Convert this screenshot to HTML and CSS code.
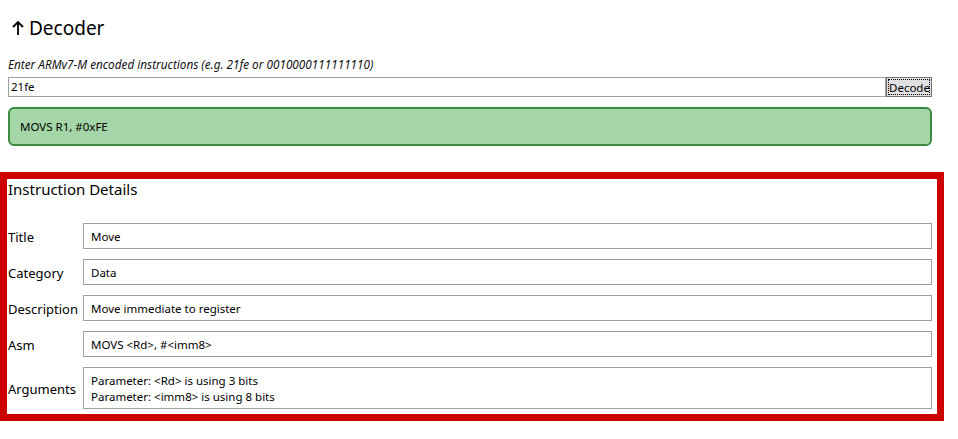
FILE: index.html
```html
<!DOCTYPE html>
<html>
<head>
<meta charset="utf-8">
<link rel="stylesheet" href="styles.css">
</head>
<body>
<div class="page">
  <h1 class="title">
    <svg class="arrow" width="12" height="16" viewBox="0 0 12 16"><path d="M6 15V2M1 7l5-5 5 5" fill="none" stroke="#000" stroke-width="1.8"/></svg>
    <span>Decoder</span>
  </h1>
  <div class="hint">Enter ARMv7-M encoded instructions (e.g. 21fe or 0010000111111110)</div>
  <div class="input-row">
    <div class="input">21fe</div>
    <div class="btn"><span class="btn-focus">Decode</span></div>
  </div>
  <div class="result">MOVS R1, #0xFE</div>
  <div class="details">
    <div class="details-title">Instruction Details</div>
    <div class="grid">
      <div class="label">Title</div><div class="box">Move</div>
      <div class="label">Category</div><div class="box">Data</div>
      <div class="label">Description</div><div class="box">Move immediate to register</div>
      <div class="label">Asm</div><div class="box">MOVS &lt;Rd&gt;, #&lt;imm8&gt;</div>
      <div class="label">Arguments</div><div class="box multi">Parameter: &lt;Rd&gt; is using 3 bits<br>Parameter: &lt;imm8&gt; is using 8 bits</div>
    </div>
  </div>
</div>
</body>
</html>
```
FILE: styles.css
```css
html, body { margin: 0; padding: 0; background: #fff; }
body { font-family: "Noto Sans", "Open Sans", sans-serif; color: #000; }
.page { padding: 0 26px 0 8px; width: 924px; }
.title { margin: 0; padding-top: 15px; height: 26px; display: flex; align-items: center; font-weight: normal; font-size: 19px; line-height: 26px; }
.arrow { margin-left: 4px; margin-right: 5px; }
.hint { margin-top: 15px; font-size: 11.75px; font-style: italic; line-height: 16px; height: 16px; color: #111; }
.input-row { margin-top: 5px; display: flex; height: 20px; }
.input { flex: 1; border: 1px solid #a0a0a0; box-sizing: border-box; height: 20px; font-size: 11.5px; line-height: 18px; padding-left: 2px; }
.btn { width: 46px; height: 20px; box-sizing: border-box; border: 1px solid #707070; background: #e1e1e1; padding: 1px; }
.btn-focus { display: block; height: 100%; box-sizing: border-box; border: 1px dotted #000; font-size: 11.5px; line-height: 15px; text-align: center; }
.result { margin-top: 10px; height: 39px; box-sizing: border-box; border: 2px solid #3d8b40; border-radius: 6px; background: #a5d6a7; font-size: 11.5px; line-height: 35px; padding-left: 10px; }
.details { margin: 26px 0 0 -8px; border: 7px solid #cc0000; padding: 0 5px 5px 1px; width: 944px; box-sizing: border-box; }
.details-title { font-size: 15px; line-height: 20px; padding-top: 0; height: 44px; }
.grid { display: grid; grid-template-columns: 75px 1fr; row-gap: 10px; grid-template-rows: 26px 26px 26px 26px 42px; }
.label { font-size: 13px; display: flex; align-items: center; padding-top: 2px; }
.box { border: 1px solid #a0a0a0; box-sizing: border-box; font-size: 11.5px; line-height: 16px; padding: 6px 7px 4px; display: flex; align-items: center; }
.multi { display: block; padding-top: 5px; }
```
